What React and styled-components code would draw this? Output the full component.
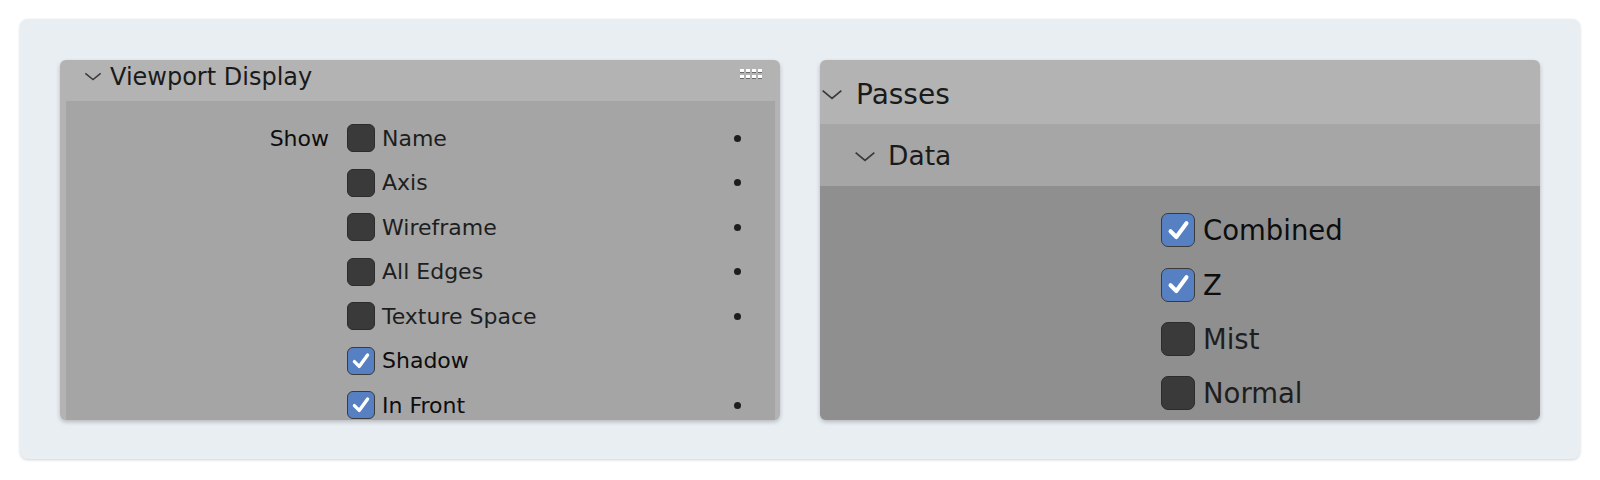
import React from "react";
import styled, { createGlobalStyle } from "styled-components";

const GlobalStyle = createGlobalStyle`
    body {
        margin: 0;
        background: #ffffff;
        font-family: "DejaVu Sans", "Liberation Sans", sans-serif;
    }
`

const viewportItems = [
    { label: "Name", checked: false, dot: true },
    { label: "Axis", checked: false, dot: true },
    { label: "Wireframe", checked: false, dot: true },
    { label: "All Edges", checked: false, dot: true },
    { label: "Texture Space", checked: false, dot: true },
    { label: "Shadow", checked: true, dot: false },
    { label: "In Front", checked: true, dot: true },
];

const passItems = [
    { label: "Combined", checked: true },
    { label: "Z", checked: true },
    { label: "Mist", checked: false },
    { label: "Normal", checked: false },
];

const Chevron = ({ size }) => (
    <svg width={size} height={size / 2} viewBox="0 0 20 10">
        <polyline points="1.5,1.5 10,8.5 18.5,1.5" fill="none" stroke="#3a3a3a" strokeWidth="1.6" />
    </svg>
)

const Check = ({ size }) => (
    <svg width={size} height={size} viewBox="0 0 20 20">
        <polyline points="4.5,10.5 8.5,14.5 15.5,5" fill="none" stroke="#ffffff" strokeWidth="2.8" strokeLinecap="round" strokeLinejoin="round" />
    </svg>
)

const GripIcon = () => (
    <StGrip>
        {Array.from({ length: 8 }).map((_, i) => <StGripDot key={i} />)}
    </StGrip>
)

const App = () => {
    return (
        <StPage>
            <GlobalStyle />
            <StBoard>
                <StPanel>
                    <StHeader>
                        <Chevron size={18} />
                        <StHeaderTitle>Viewport Display</StHeaderTitle>
                        <GripIcon />
                    </StHeader>
                    <StLeftBody>
                        {viewportItems.map((item, i) => (
                            <StLeftRow key={item.label}>
                                <StRowLabel>{i === 0 ? "Show" : ""}</StRowLabel>
                                <StCheckbox $checked={item.checked} $size={28}>
                                    {item.checked && <Check size={24} />}
                                </StCheckbox>
                                <StItemText $checked={item.checked}>{item.label}</StItemText>
                                {item.dot ? <StDot /> : <span />}
                            </StLeftRow>
                        ))}
                    </StLeftBody>
                </StPanel>

                <StPanel>
                    <StPassesHeader>
                        <Chevron size={22} />
                        <StPassesTitle>Passes</StPassesTitle>
                    </StPassesHeader>
                    <StSubHeader>
                        <Chevron size={22} />
                        <StSubTitle>Data</StSubTitle>
                    </StSubHeader>
                    <StRightBody>
                        {passItems.map((item) => (
                            <StRightRow key={item.label}>
                                <StCheckbox $checked={item.checked} $size={34}>
                                    {item.checked && <Check size={29} />}
                                </StCheckbox>
                                <StPassText $checked={item.checked}>{item.label}</StPassText>
                            </StRightRow>
                        ))}
                    </StRightBody>
                </StPanel>
            </StBoard>
        </StPage>
    )
}

export default App;

const StPage = styled.div`
    padding: 19px 20px 20px;
`

const StBoard = styled.div`
    background: #e9eef2;
    border-radius: 8px;
    box-shadow: 0 1px 3px rgba(0, 0, 0, 0.18);
    padding: 41px 40px 40px;
    display: grid;
    grid-template-columns: 720px 720px;
    gap: 40px;
    height: 440px;
    box-sizing: border-box;
`

const StPanel = styled.div`
    background: #b3b3b3;
    border-radius: 6px;
    box-shadow: 0 2px 4px rgba(0, 0, 0, 0.22);
    overflow: hidden;
    height: 360px;
    display: flex;
    flex-direction: column;
`

const StHeader = styled.div`
    height: 41px;
    box-sizing: border-box;
    flex-shrink: 0;
    display: flex;
    align-items: center;
    padding: 0 18px 8px 24px;
    gap: 8px;
    color: #1a1a1a;
`

const StHeaderTitle = styled.div`
    flex: 1;
    font-size: 24px;
    line-height: 1;
`

const StGrip = styled.div`
    display: grid;
    grid-template-columns: repeat(4, 4px);
    grid-auto-rows: 4px;
    column-gap: 2px;
    row-gap: 2px;
    margin-top: -5px;
`

const StGripDot = styled.div`
    background: #ffffff;
    border-bottom: 1px solid #6a6a6a;
    box-sizing: border-box;
`

const StLeftBody = styled.div`
    flex: 1;
    background: #a5a5a5;
    margin: 0 5px 0 6px;
    padding-top: 15px;
`

const StLeftRow = styled.div`
    display: grid;
    grid-template-columns: 281px 28px 1fr 43px;
    align-items: center;
    height: 44.5px;
`

const StRowLabel = styled.div`
    text-align: right;
    padding-right: 18px;
    font-size: 22px;
    color: #0d0d0d;
`

const StCheckbox = styled.div`
    width: ${(p) => p.$size}px;
    height: ${(p) => p.$size}px;
    box-sizing: border-box;
    border-radius: ${(p) => Math.round(p.$size / 5)}px;
    background: ${(p) => (p.$checked ? "#5680c2" : "#3a3a3a")};
    border: 1px solid ${(p) => (p.$checked ? "#3b3b3b" : "#2c2c2c")};
    display: flex;
    align-items: center;
    justify-content: center;
`

const StItemText = styled.div`
    font-size: 22px;
    color: ${(p) => (p.$checked ? "#0d0d0d" : "#1e1e1e")};
    padding-left: 7px;
    white-space: nowrap;
`

const StDot = styled.div`
    width: 7px;
    height: 7px;
    border-radius: 50%;
    background: #1e1e1e;
    justify-self: start;
    margin-left: 2px;
`

const StPassesHeader = styled.div`
    height: 64px;
    box-sizing: border-box;
    flex-shrink: 0;
    display: flex;
    align-items: center;
    gap: 13px;
    padding: 5px 0 0 1px;
    color: #1a1a1a;
`

const StPassesTitle = styled.div`
    font-size: 28px;
    line-height: 1;
`

const StSubHeader = styled.div`
    height: 62px;
    box-sizing: border-box;
    flex-shrink: 0;
    background: #a6a6a6;
    display: flex;
    align-items: center;
    gap: 12px;
    padding: 3px 0 0 34px;
    color: #1a1a1a;
`

const StSubTitle = styled.div`
    font-size: 26.5px;
    line-height: 1;
`

const StRightBody = styled.div`
    flex: 1;
    background: #8f8f8f;
    padding: 17px 0 0 341px;
`

const StRightRow = styled.div`
    display: flex;
    align-items: center;
    height: 54.4px;
`

const StPassText = styled.div`
    font-size: 27.5px;
    color: ${(p) => (p.$checked ? "#0d0d0d" : "#1e1e1e")};
    padding-left: 8px;
    white-space: nowrap;
`
